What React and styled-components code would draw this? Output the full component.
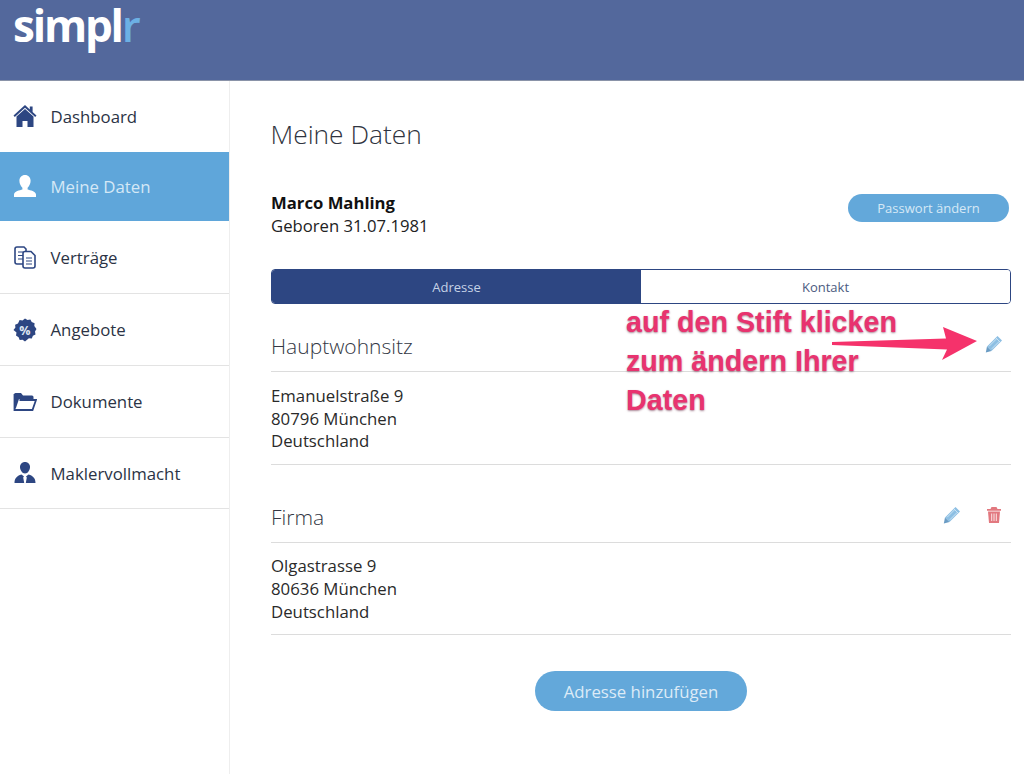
import React from "react";
import styled, { createGlobalStyle } from "styled-components";

const Global = createGlobalStyle`
  html, body { margin: 0; padding: 0; background: #fff; }
  body { font-family: "Open Sans", "Liberation Sans", sans-serif; color: #222; }
  #root { width: 1024px; height: 774px; overflow: hidden; position: relative; }
`;

const Header = styled.header`
  height: 81px;
  box-sizing: border-box;
  background: #53689c;
  border-bottom: 1px solid #8a93a8;
  padding: 0 0 0 13px;
`;
const Logo = styled.div`
  font-family: "Open Sans", sans-serif;
  font-weight: 700;
  font-size: 44px;
  line-height: 50px;
  letter-spacing: -2.2px;
  color: #fff;
  span { color: #6cb0e4; font-weight: 600; }
`;
const Body = styled.div`
  display: flex;
  height: 693px;
`;
const Sidebar = styled.nav`
  width: 230px;
  flex: none;
  box-sizing: border-box;
  border-right: 1px solid #eeeeee;
`;
const NavItem = styled.div`
  display: flex;
  align-items: center;
  height: ${(p) => p.$h || 72}px;
  box-sizing: border-box;
  padding-left: 13px;
  gap: 13.5px;
  font-size: 16.8px;
  color: ${(p) => (p.$active ? "#d4e8f6" : "#2b3345")};
  background: ${(p) => (p.$active ? "#5fa6da" : "transparent")};
  border-bottom: 1px solid ${(p) => (p.$border ? "#e3e3e3" : "transparent")};
  svg { width: 24px; height: 24px; flex: none; }
`;
const Main = styled.main`
  flex: 1;
  box-sizing: border-box;
  padding: 0 13px 0 41px;
  position: relative;
`;
const Title = styled.h1`
  margin: 0 0 0 -0.5px;
  padding-top: 36px;
  font-size: 26.3px;
  line-height: 34px;
  font-weight: 300;
  color: #2f3440;
`;
const Profile = styled.div`
  display: flex;
  justify-content: space-between;
  align-items: flex-start;
  margin-top: 40px;
  padding-right: 2px;
`;
const Person = styled.div`
  font-size: 16.7px;
  line-height: 23px;
  color: #222;
  strong { display: block; font-weight: 700; color: #111; }
`;
const PillButton = styled.button`
  border: 0;
  border-radius: ${(p) => p.$h / 2}px;
  background: #63a8da;
  color: ${(p) => p.$color};
  font-family: inherit;
  font-size: ${(p) => p.$size}px;
  width: ${(p) => p.$w}px;
  height: ${(p) => p.$h}px;
  padding: 0;
  margin-top: ${(p) => p.$mt || 0}px;
`;
const Tabs = styled.div`
  display: flex;
  height: 35px;
  margin-top: 32px;
  border-radius: 4px;
  overflow: hidden;
  box-sizing: border-box;
  border: 1px solid #2d4682;
`;
const Tab = styled.div`
  flex: 1;
  display: flex;
  align-items: center;
  justify-content: center;
  font-size: 13px;
  background: ${(p) => (p.$active ? "#2d4682" : "#fff")};
  color: ${(p) => (p.$active ? "#c6d2e6" : "#4b5b80")};
`;
const SectionHead = styled.div`
  display: flex;
  justify-content: space-between;
  align-items: center;
  height: ${(p) => p.$h}px;
  box-sizing: border-box;
  border-bottom: 1px solid #dcdcdc;
  padding-top: ${(p) => p.$pt}px;
  font-size: 21px;
  font-weight: 300;
  color: #333844;
`;
const Actions = styled.div`
  display: flex;
  gap: 24px;
  padding-right: 8px;
  margin-top: -4px;
  svg { width: 18px; height: 18px; display: block; }
`;
const Address = styled.div`
  font-size: 16.8px;
  line-height: 22.7px;
  color: #2a2a2a;
  padding: ${(p) => p.$pt}px 0 11px;
  border-bottom: 1px solid #dcdcdc;
`;
const Center = styled.div`
  display: flex;
  justify-content: center;
`;
const Note = styled.div`
  position: absolute;
  left: 396px;
  top: 222px;
  font-family: "Liberation Sans", Arial, sans-serif;
  font-weight: 700;
  font-size: 28.7px;
  line-height: 39px;
  color: #e8336f;
  text-shadow: 0 1px 2px rgba(90, 20, 50, 0.5);
  white-space: pre;
`;
const Arrow = styled.svg`
  position: absolute;
  left: 600px;
  top: 245px;
  width: 150px;
  height: 40px;
`;

const Home = () => (
  <svg viewBox="0 0 24 24" fill="#2d4682">
    <path d="M12 1 0.500 11.500l1.300 1.500L12 3.800l10.200 9.200 1.300-1.500-3.900-3.500V2.500h-2.800v3z" />
    <path fillRule="evenodd" d="M3.500 12.500 12 5l8.500 7.500V23h-17zM9.500 17v6h5v-6z" />
  </svg>
);
const Person1 = () => (
  <svg viewBox="0 0 24 24" fill="#fff">
    <path d="M12 1c3.400 0 5.600 2.500 5.600 5.800 0 3-1.500 5.500-3 7v1.600c2.500.8 8.400 1.600 8.400 5.100V23H1v-2.500c0-3.500 5.900-4.300 8.400-5.100v-1.600c-1.500-1.500-3-4-3-7C6.400 3.500 8.600 1 12 1z" />
  </svg>
);
const Docs = () => (
  <svg viewBox="0 0 24 24" fill="#fff" stroke="#2d4682" strokeWidth="1.600">
    <path d="M4 2h7l2 2v15H4a2 2 0 0 1-2-2V4a2 2 0 0 1 2-2z" />
    <path d="M5 7h5M5 10.500h5M5 14h5" strokeWidth="1.200" />
    <path d="M12 6.500h6l4 4V21a2 2 0 0 1-2 2h-8a2 2 0 0 1-2-2V8.500a2 2 0 0 1 2-2z" />
    <path d="M13 13h6M13 16h6M13 19h6" strokeWidth="1.200" />
  </svg>
);
const Badge = () => (
  <svg viewBox="0 0 24 24">
    <path fill="#2d4682" d="M12 .5l2.500 1.500 2.900-.6 1.300 2.600 2.900 1.200-.3 2.900L23.500 11l-1.500 2.500.5 2.900-2.600 1.400-1.100 2.700-2.900-.3L12 23.500l-2.400-1.800-2.900.3-1.100-2.700L3 17.400l.5-2.900L.5 12l1.900-2.400-.3-2.900 2.900-1.200L6.600 1.900l2.900.6z" />
    <text x="12" y="16.500" textAnchor="middle" fontSize="12.500" fontWeight="700" fontFamily="Open Sans" fill="#dfe6f2">%</text>
  </svg>
);
const Folder = () => (
  <svg viewBox="0 0 24 24" fill="none">
    <path fill="#2d4682" d="M1 4.500A1.500 1.500 0 0 1 2.500 3H8l2 2.500h9A1.500 1.500 0 0 1 20.500 7v2H6L2.800 18.500H1z" />
    <path stroke="#2d4682" strokeWidth="1.800" d="M6.500 10H23l-3.500 10H1.500V4" />
  </svg>
);
const Agent = () => (
  <svg viewBox="0 0 24 24" fill="#2d4682">
    <path d="M12 1c3 0 5 2.200 5 5 0 2.800-2 6.500-5 6.500S7 8.800 7 6c0-2.800 2-5 5-5z" />
    <path d="M8.500 13.500 11 15.500l-.8 1 1 5.500H1.500c0-4.500 2-7 7-8.500zM15.500 13.500l-2.500 2 .8 1-1 5.500h9.700c0-4.500-2-7-7-8.500z" />
  </svg>
);
const Pencil = () => (
  <svg viewBox="0 0 18 18">
    <path fill="#8dbfe3" d="M12.500 1 17 5.500 6.500 16 2 11.500z" />
    <path fill="#6a9cc4" d="M2 11.500 6.500 16 .8 17.500z" />
    <path stroke="#e2f0fa" strokeWidth="0.700" fill="none" d="M10.800 2.800l4.400 4.400M4.200 11.200l7.500-7.500M6.800 13.800l7.500-7.500" />
  </svg>
);
const Trash = () => (
  <svg viewBox="0 0 18 18" fill="none">
    <path fill="#e2787f" d="M6.500 1h5l1 2H16v1.800H2V3h3.500z" />
    <path fill="#e2787f" d="M3 5.500h12L14 17H4z" />
    <path stroke="#fbe6e7" strokeWidth="1" d="M6.700 7.500v7.500M9 7.500v7.500M11.300 7.500v7.500" />
  </svg>
);

export default function App() {
  return (
    <>
      <Global />
      <Header>
        <Logo>simpl<span>r</span></Logo>
      </Header>
      <Body>
        <Sidebar>
          <NavItem $h={71}><Home />Dashboard</NavItem>
          <NavItem $h={69} $active><Person1 />Meine Daten</NavItem>
          <NavItem $h={73} $border><Docs />Verträge</NavItem>
          <NavItem $border><Badge />Angebote</NavItem>
          <NavItem $border><Folder />Dokumente</NavItem>
          <NavItem $h={71} $border><Agent />Maklervollmacht</NavItem>
        </Sidebar>
        <Main>
          <Title>Meine Daten</Title>
          <Profile>
            <Person>
              <strong>Marco Mahling</strong>
              Geboren 31.07.1981
            </Person>
            <PillButton $w={161} $h={28} $size={13} $mt={3} $color="#d6e8f6">Passwort ändern</PillButton>
          </Profile>
          <Tabs>
            <Tab $active>Adresse</Tab>
            <Tab>Kontakt</Tab>
          </Tabs>
          <SectionHead $h={68} $pt={16}>
            Hauptwohnsitz
            <Actions><Pencil /></Actions>
          </SectionHead>
          <Address $pt={13}>
            Emanuelstraße 9<br />80796 München<br />Deutschland
          </Address>
          <SectionHead $h={78} $pt={26}>
            Firma
            <Actions><Pencil /><Trash /></Actions>
          </SectionHead>
          <Address $pt={12}>
            Olgastrasse 9<br />80636 München<br />Deutschland
          </Address>
          <Center>
            <PillButton $w={212} $h={40} $size={16.8} $mt={36} $color="#dcebf7">Adresse hinzufügen</PillButton>
          </Center>
          <Note>{"auf den Stift klicken\nzum ändern Ihrer\nDaten"}</Note>
          <Arrow viewBox="0 0 150 40">
            <path fill="#f5326b" d="M2 16 116 12.500 113 1 147 15 112 34 117 23.500 2 19z" />
          </Arrow>
        </Main>
      </Body>
    </>
  );
}
